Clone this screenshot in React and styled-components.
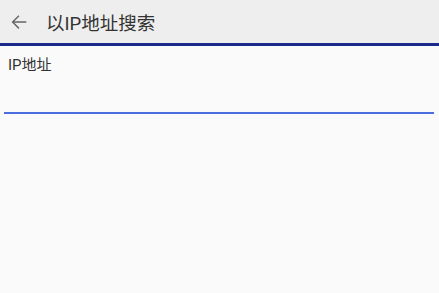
import React from "react";
import styled, { createGlobalStyle } from "styled-components";

const Global = createGlobalStyle`
  html, body { margin: 0; padding: 0; background: #fafafa; }
  body { font-family: Roboto, "Noto Sans CJK SC", sans-serif; }
`;

export default function App() {
  return (
    <Page>
      <Global />
      <Bar>
        <Back aria-label="back">
          <svg width="22" height="22" viewBox="0 0 24 24">
            <path d="M20 11.2H6.9l5.6-5.6L11.4 4.5 3.9 12l7.5 7.5 1.1-1.1-5.6-5.6H20z" fill="#666" />
          </svg>
        </Back>
        <Title>以IP地址搜索</Title>
      </Bar>
      <Form>
        <Field>
          <Label>IP地址</Label>
          <Input />
        </Field>
      </Form>
    </Page>
  );
}

const Page = styled.div`
  width: 439px; min-height: 293px; background: #fafafa;
`;
const Bar = styled.div`
  height: 43px; background: #eeeeee; border-bottom: 3px solid #1c2a8a;
  display: flex; align-items: center; box-sizing: content-box;
`;
const Back = styled.button`
  border: 0; background: none; padding: 0; margin-left: 8px; width: 22px; height: 22px;
  display: flex; align-items: center; justify-content: center; cursor: pointer;
`;
const Title = styled.div`
  margin-left: 16px; font-size: 18.5px; color: #333; font-family: Roboto, "Noto Sans CJK SC", sans-serif;
`;
const Form = styled.div` padding: 10px 5px 0 4px; `;
const Field = styled.div` display: grid; gap: 0; `;
const Label = styled.label`
  font-size: 15px; color: #333; padding-left: 4px; line-height: 18px;
`;
const Input = styled.input`
  border: 0; border-bottom: 2px solid #4a6ee0; background: transparent; height: 36px;
  padding: 0; outline: none; font-size: 15px; margin-top: 4px; box-sizing: border-box;
`;
